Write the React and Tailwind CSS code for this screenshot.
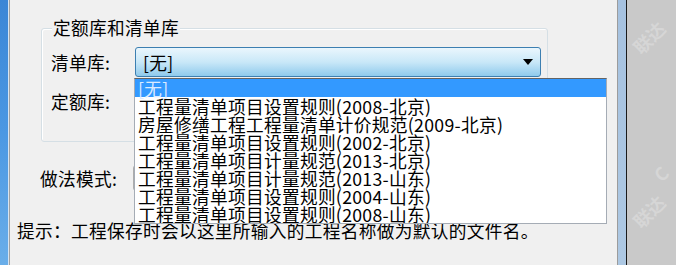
import React from "react";

const items = [
  "工程量清单项目设置规则(2008-北京)",
  "房屋修缮工程工程量清单计价规范(2009-北京)",
  "工程量清单项目设置规则(2002-北京)",
  "工程量清单项目计量规范(2013-北京)",
  "工程量清单项目计量规范(2013-山东)",
  "工程量清单项目设置规则(2004-山东)",
  "工程量清单项目设置规则(2008-山东)",
];

const font = { fontFamily: '"Noto Sans CJK SC", "Noto Sans", sans-serif' };

function Arrow() {
  return (
    <svg width="10" height="6" viewBox="0 0 10 6">
      <path d="M0 0 L10 0 L5 6 Z" fill="#000" />
    </svg>
  );
}

export default function App() {
  return (
    <div className="flex h-[265px] w-[676px] overflow-hidden text-black" style={font}>
      <div className="w-[8px] bg-gradient-to-b from-[#3b86d6] via-[#4b98e3] to-[#6aaee9]" />
      <div className="w-px bg-[#d6e4f2]" />
      <div className="w-px bg-[#a3a3a3]" />

      <div className="relative flex w-[607px] flex-col bg-[#f0f0f0] text-[17.7px] leading-[20px] tracking-[0.3px]">
        {/* group box */}
        <div className="relative ml-[31px] mt-[28px] h-[114px] w-[507px] rounded-[3px] border border-[#d5dfe5] shadow-[inset_1px_1px_0_#fff]">
          <span className="absolute left-[10px] top-[-12px] bg-[#f0f0f0] px-px">定额库和清单库</span>

          <div className="ml-[9px] mt-[18px] flex items-center">
            <span className="w-[84px]">清单库:</span>
            <div className="flex h-[30px] w-[406px] items-center justify-between rounded-[3px] border border-[#3c7fb1] bg-gradient-to-b from-[#eaf6fd] via-[#c9e8f8] to-[#8fcaec] pl-[7px] pr-[7px]">
              <span>[无]</span>
              <Arrow />
            </div>
          </div>

          <div className="ml-[9px] mt-[11px] flex items-center">
            <span className="w-[84px]">定额库:</span>
            <div className="h-[26px] w-[406px] rounded-[3px] border border-[#acacac] bg-[#ececec]" />
          </div>
        </div>

        <div className="ml-[30px] mt-[23px] flex items-center">
          <span className="w-[93px]">做法模式:</span>
          <div className="h-[26px] w-[300px] rounded-[3px] border border-[#acacac] bg-[#ececec]" />
        </div>

        <div className="ml-[7px] mt-[29px]">提示：工程保存时会以这里所输入的工程名称做为默认的文件名。</div>

        {/* open dropdown list */}
        <div className="absolute left-[124px] top-[78px] h-[146px] w-[473px] overflow-hidden border border-[#a5acb5] border-t-[#646464] bg-white leading-[18px]">
          <div className="h-[18px] bg-[#3399ff] pl-[3px] text-[#dcebff]">[无]</div>
          {items.map((t) => (
            <div key={t} className="h-[18px] whitespace-nowrap pl-[3px]">
              {t}
            </div>
          ))}
        </div>
      </div>

      <div className="w-px bg-[#9c9c9c]" />
      <div className="w-[8px] bg-gradient-to-b from-[#a6c2e0] to-[#adc8e3]" />
      <div className="w-px bg-[#1a1a1a]" />
      <div className="relative flex-1 bg-[#c9c9c9] text-[18px] font-bold text-white/25">
        <span className="absolute left-[4px] top-[24px] -rotate-45">联达</span>
        <span className="absolute left-[28px] top-[160px] -rotate-45">C</span>
        <span className="absolute left-[4px] top-[198px] -rotate-45">联达</span>
      </div>
    </div>
  );
}
